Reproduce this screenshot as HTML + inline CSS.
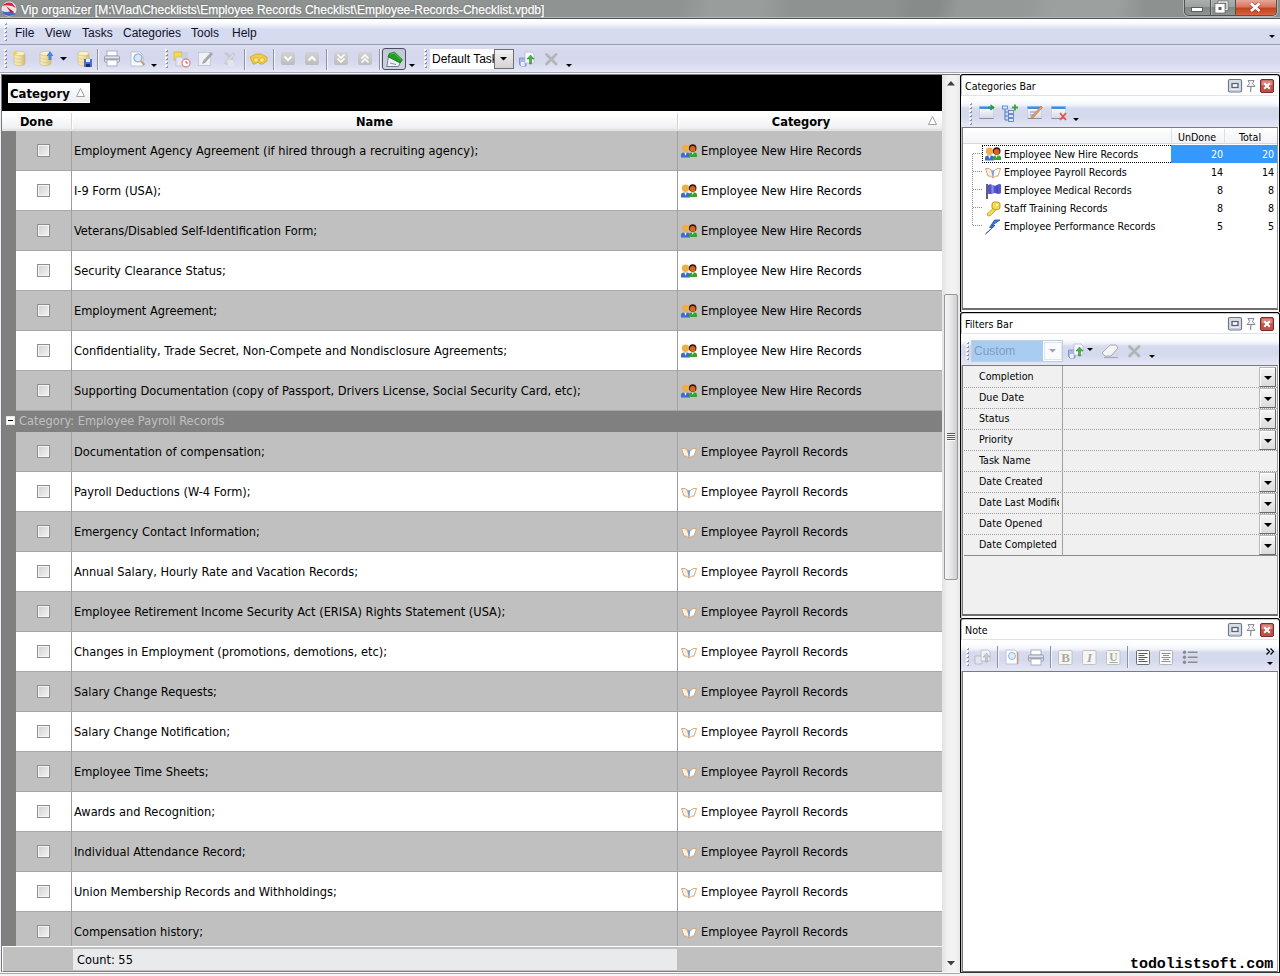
<!DOCTYPE html>
<html lang="en"><head><meta charset="utf-8"><title>Vip organizer</title>
<style>
*{box-sizing:border-box;margin:0;padding:0}
html,body{width:1280px;height:976px;overflow:hidden;background:#f0f0f0}
body{position:relative;font-family:"DejaVu Sans Condensed","Liberation Sans",sans-serif;font-size:11px;color:#000}
.abs{position:absolute}
svg{position:absolute;overflow:visible}
/* title bar */
#title{position:absolute;left:0;top:0;width:1280px;height:18px;background:linear-gradient(100deg,#8b908f 0,#8d9291 200px,#8f9493 500px,#8f9493 670px,#999e9d 700px,#999e9d 750px,#8e9392 780px,#8e9392 880px,#878c8b 900px,#878c8b 925px,#959a99 945px,#959a99 1010px,#9ca1a0 1040px,#9ca1a0 1100px,#8d9291 1130px,#8b908f 1280px);box-shadow:inset 0 -1px 0 #b4b8b8}
#title .t{position:absolute;left:21px;top:2px;color:#fff;font:12px/16px "Liberation Sans",sans-serif;white-space:pre;text-shadow:0 0 2px rgba(60,60,60,.6);-webkit-text-stroke:.25px #fff}
#tline{position:absolute;left:0;top:18px;width:1280px;height:1px;background:#505454}
#wbtn{position:absolute;left:1184px;top:0;width:93px;height:16px;border:1px solid #4f5352;border-top:none;border-radius:0 0 5px 5px;overflow:hidden;background:linear-gradient(#abafaf,#9da1a1 45%,#848988 50%,#8f9493);box-shadow:0 0 0 1px rgba(255,255,255,.35)}
#wbtn .c{position:absolute;left:50px;top:0;width:43px;height:16px;background:linear-gradient(#e6a898,#d7735b 45%,#c4411f 50%,#cf5530 80%,#dc7450);border-left:1px solid #4f5352}
#wbtn .s{position:absolute;left:25px;top:0;width:1px;height:16px;background:#4f5352;box-shadow:1px 0 0 rgba(255,255,255,.25)}
/* menu */
#menu{position:absolute;left:0;top:19px;width:1280px;height:26px;background:linear-gradient(#fff 0,#fbfbfe 4px,#e4e8f5 8px,#d6dcef 10px,#d6dbef 100%)}
#menu span{position:absolute;top:7px;font:12px/15px "Liberation Sans",sans-serif;color:#10102a;white-space:pre}
#mline{position:absolute;left:0;top:44px;width:1280px;height:1px;background:#9a9cab}
#tb{position:absolute;left:0;top:45px;width:1280px;height:27px;background:linear-gradient(#dcdff1 0,#d6d9ed 6px,#d5d8ec 15px,#dde0f3 22px,#e8eaf7 27px)}
#tbline{position:absolute;left:0;top:72px;width:1280px;height:2px;background:linear-gradient(#a6a8b4 0,#a6a8b4 1px,#fbfbfd 1px)}
.grip{position:absolute;width:3px}
.grip::before{content:"";position:absolute;left:1px;top:1px;width:2px;height:100%;background:repeating-linear-gradient(#8f95b3 0,#8f95b3 2px,transparent 2px,transparent 4px)}
.grip::after{content:"";position:absolute;left:0;top:0;width:2px;height:100%;background:repeating-linear-gradient(#fff 0,#fff 2px,transparent 2px,transparent 4px)}
.sep{position:absolute;width:1px;background:#8e92a8;box-shadow:1px 0 0 #f4f5fb}
/* main list (page-absolute coords) */
#leftedge{position:absolute;left:0;top:74px;width:960px;height:902px;background:#f0f0f0}
#lborder{position:absolute;left:1px;top:74px;width:959px;height:898px;border:1px solid #767a80;border-right:none;border-bottom:none}
#listbg{position:absolute;left:2px;top:75px;width:940px;height:897px;background:#c0c0c0}
#grpbox{position:absolute;left:2px;top:75px;width:940px;height:36px;background:#000}
#chip{position:absolute;left:8px;top:83px;width:82px;height:20px;background:linear-gradient(#fff,#eceef2);border:1px solid #fff;font:bold 13px/20px "DejaVu Sans Condensed","Liberation Sans",sans-serif;padding-left:1px;white-space:pre}
#hdr{position:absolute;left:2px;top:111px;width:940px;height:20px;background:linear-gradient(#fff 0,#fff 4px,#eef0f3 17px,#e9ebee 18px,#d5d5d5 19px,#f4f4f4 20px)}
#hdr b{position:absolute;top:2px;font:bold 12.7px/18px "DejaVu Sans Condensed","Liberation Sans",sans-serif;white-space:pre;text-align:center}
#hdr i{position:absolute;top:2px;width:1px;height:16px;background:#d4d4d8;box-shadow:1px 0 0 #fff}
#strip{position:absolute;left:2px;top:131px;width:14px;height:815px;background:#808080}
.row{position:absolute;left:16px;width:926px;height:40px;font-size:12.7px;line-height:39px;white-space:pre}
.row.g{background:#c0c0c0;border-bottom:1px solid #a6a6a6}
.row.w{background:#fff;border-bottom:1px solid #a9a9a9}
.row::before{content:"";position:absolute;left:55px;top:0;width:1px;height:40px;background:#9c9c9c}
.row::after{content:"";position:absolute;left:661px;top:0;width:1px;height:40px;background:#9c9c9c}
.row.g::before,.row.g::after{background:#a2a2a2}
.cb{position:absolute;left:21px;top:13px;width:13px;height:13px;border:1px solid #8e8f8f;background:linear-gradient(135deg,#cfcfcf,#f6f6f6);box-shadow:inset 0 0 0 1px #f4f4f4}
.nm{position:absolute;left:58px;top:0}
.ct{position:absolute;left:685px;top:0}
.ci{left:665px;top:13px}
.grp{position:absolute;left:2px;width:940px;height:21px;background:#808080;color:#c0c0c0;font-size:12.7px;line-height:20px;padding-left:17px;white-space:pre}
.minus{position:absolute;left:4px;top:5px;width:9px;height:9px;background:#fff;border:1px solid #e8e8e8}
.minus::after{content:"";position:absolute;left:1px;top:3px;width:5px;height:1px;background:#000}
#foot{position:absolute;left:2px;top:946px;width:940px;height:26px;background:#c0c0c0;border-top:1px solid #fff;border-left:1px solid #fff;border-bottom:1px solid #808080}
#cnt{position:absolute;left:73px;top:949px;width:604px;height:21px;background:#e8eaeb;font-size:12.7px;line-height:21px;padding-left:4px;white-space:pre}
#botline{position:absolute;left:0;top:972px;width:960px;height:4px;background:linear-gradient(#fafafa 0,#fafafa 1px,#a8a8a8 1px,#a8a8a8 2px,#f4f4f4 2px)}
/* scrollbar */
#sb{position:absolute;left:942px;top:75px;width:18px;height:897px;background:linear-gradient(90deg,#e3e3e3,#f0f0f0 30%,#f3f3f3 70%,#e9e9e9)}
#thumb{position:absolute;left:944px;top:294px;width:14px;height:286px;border:1px solid #979797;border-radius:2px;background:linear-gradient(90deg,#f5f5f5,#e6e6e8 50%,#cfcfd3)}
/* right panels */
.pnl{position:absolute;left:960px;width:320px;background:#fff;border:1px solid #000;border-bottom:none;border-radius:3px 3px 0 0;box-shadow:inset 1px 0 0 rgba(0,0,0,.25),inset 0 1px 0 rgba(0,0,0,.2)}
.sunk{position:absolute;left:962px;width:316px;border:1px solid #7b7b7b;border-right-color:#9a9a9a;border-bottom:2px solid #6e6e6e}
.pt{position:absolute;left:965px;font-size:10.6px;line-height:14px;white-space:pre;color:#000}
.ptb{position:absolute;left:961px;width:318px;background:linear-gradient(#fff 0,#f9fafd 7px,#eceef8 10px,#d7dbee 12px,#d4d8ec 20px,#e3e6f5 30px)}
.pbtn{position:absolute;width:14px;height:14px}
.tree{position:absolute;left:963px;top:128px;width:314px;height:181px;background:#fff;border-top:0}
.th{position:absolute;left:963px;top:128px;width:314px;height:16px;background:linear-gradient(#fff,#f2f3f6);border-bottom:1px solid #d9d9dc}
.th span{position:absolute;top:2px;font-size:10.6px;line-height:14px}
.tr{position:absolute;left:963px;width:314px;height:18px;font-size:10.6px;line-height:18px;white-space:pre}
.tr .l{position:absolute;left:41px;top:0}
.tr .n1{position:absolute;right:54px;top:0;text-align:right}
.tr .n2{position:absolute;right:3px;top:0;text-align:right}
.tr svg{left:22px;top:2px}
.sel{position:absolute;left:1171px;top:145px;width:106px;height:18px;background:#3399ff}
.focus{position:absolute;left:982px;top:145px;width:189px;height:18px;border:1px dotted #000;border-right:none}
.fgrid{position:absolute;left:963px;top:366px;width:314px;height:248px;background:#f0f0f0}
.fr{position:absolute;left:964px;width:313px;height:21px;font-size:10.6px;line-height:18px;border-bottom:1px dotted #9c9c9c;white-space:pre;overflow:hidden}
.fr span{position:absolute;left:15px;top:0;width:80px;overflow:hidden}
.fdiv{position:absolute;left:1062px;top:366px;width:1px;height:190px;background:#a0a0a0}
.dd{position:absolute;left:1259px;width:17px;height:20px;border:1px solid #b8b8b8;border-right-color:#6a6a6a;border-bottom-color:#6a6a6a;background:linear-gradient(#f6f6f6,#dcdcdc);box-shadow:inset 1px 1px 0 #fff}
.dd::after{content:"";position:absolute;left:4px;top:8px;border:4px solid transparent;border-top:4px solid #000;border-bottom:0}
.wm{position:absolute;left:1130px;top:955.5px;font:bold 15px/18px "Liberation Mono",monospace;color:#000;white-space:pre;letter-spacing:-0.05px}

</style></head><body>
<svg width="0" height="0" style="position:absolute"><defs>
<linearGradient id="gcyl" x1="0" x2="1"><stop offset="0" stop-color="#f6ecc0"/><stop offset=".5" stop-color="#f2e2a2"/><stop offset="1" stop-color="#cdb978"/></linearGradient>
<linearGradient id="gbtn" x1="0" x2="0" y1="0" y2="1"><stop offset="0" stop-color="#d2d2d2"/><stop offset="1" stop-color="#bdbdbd"/></linearGradient>
<linearGradient id="gwin" x1="0" x2="0" y1="0" y2="1"><stop offset="0" stop-color="#ffffff"/><stop offset="1" stop-color="#d4d8e6"/></linearGradient>
<g id="i-people"><circle cx="4.500" cy="4.200" r="3.700" fill="#edae4e"/><path d="M0 13.500 v-2.500 q0-2.500 3-2.500 h3 q3 0 3 2.500 v2.500z" fill="#3f69cd"/><path d="M3.300 8.500 l1.200 3.500 l1.200-3.500z" fill="#fff"/><circle cx="11.700" cy="4" r="3.800" fill="#38190e"/><circle cx="11.700" cy="4.800" r="2.800" fill="#d8641e"/><path d="M8 13 v-2 q0-2.500 2.500-2.500 h3 q2.500 0 2.500 2.500 v2z" fill="#34a234"/><path d="M10.700 8.500 l1 2.500 l1-2.500z" fill="#fff"/></g>
<g id="i-book"><path d="M0.500 3.500 Q4 2.500 7.500 6 L8 13 Q5.500 10.500 3 11 Z" fill="#fbf1e2" stroke="#d6a676" stroke-width="1"/><path d="M15.500 3.500 Q12 2.500 8.500 6 L8 13 Q10.500 10.500 13 11 Z" fill="#ffffff" stroke="#d6a676" stroke-width="1"/><path d="M6 5.500 L8 12 L9.500 5 Z" fill="#78a4e4"/></g>
<g id="i-flag"><path d="M2 1 v15" stroke="#50506e" stroke-width="1.800"/><path d="M3 2 q2-1.500 4.500 0 t4.500 0 t4-0.500 v8.500 q-2 1.500-4 0.500 t-4.500 0 t-4.500 0z" fill="#5656cc"/><path d="M7.500 2 v8.500" stroke="#8e8eea" stroke-width="2"/><path d="M12 2.500 v8" stroke="#4646b4" stroke-width="1.500"/></g>
<g id="i-key"><rect x="7" y="1" width="8" height="7.500" rx="2.500" fill="#f6dc50" stroke="#b89a1c"/><rect x="11" y="3" width="2" height="2" fill="#fff8d0"/><path d="M8 7.500 l-6 5.500 l1 2 l2.500-0.500 l5-5z" fill="#f6dc50" stroke="#b89a1c" stroke-width=".8"/></g>
<g id="i-bolt"><path d="M15 1 l-8 5.500 h3 l-9.500 8.500 l7-6.500 h-3 l5-7.500z" fill="#3f80dc" stroke="#1c3c8c" stroke-width=".7"/></g>
<g id="i-db"><path d="M2 3.500 v10 a5.500 2.200 0 0 0 11 0 v-10z" fill="url(#gcyl)" stroke="#cbb77a" stroke-width=".6"/><ellipse cx="7.500" cy="3.500" rx="5.500" ry="2.200" fill="#f8f0cc" stroke="#cbb77a" stroke-width=".6"/><path d="M2 7 a5.500 2.200 0 0 0 11 0 M2 10.300 a5.500 2.200 0 0 0 11 0" fill="none" stroke="#d6c48a" stroke-width=".7"/></g>
<g id="i-dn"><rect x="0" y="0" width="14" height="13" rx="2" fill="url(#gbtn)"/><path d="M3.500 4.500 l3.500 3.500 l3.500-3.500" fill="none" stroke="#fff" stroke-width="2"/></g>
<g id="i-up"><rect x="0" y="0" width="14" height="13" rx="2" fill="url(#gbtn)"/><path d="M3.500 8.500 l3.500-3.500 l3.500 3.500" fill="none" stroke="#fff" stroke-width="2"/></g>
<g id="i-dn2"><rect x="0" y="0" width="14" height="13" rx="2" fill="url(#gbtn)"/><path d="M3.500 2.500 l3.500 3.500 l3.500-3.500 M3.500 6.500 l3.500 3.500 l3.500-3.500" fill="none" stroke="#fff" stroke-width="1.700"/></g>
<g id="i-up2"><rect x="0" y="0" width="14" height="13" rx="2" fill="url(#gbtn)"/><path d="M3.500 6.500 l3.500-3.500 l3.500 3.500 M3.500 10.500 l3.500-3.500 l3.500 3.500" fill="none" stroke="#fff" stroke-width="1.700"/></g>
<g id="i-arr"><path d="M0 0 h6 l-3 3z" fill="#000"/></g>
<g id="i-prn"><rect x="3" y="0" width="10" height="5" fill="#fff" stroke="#9aa0b0" stroke-width=".8"/><rect x="0.500" y="5" width="15" height="6" rx="1" fill="#e4e6ee" stroke="#8a90a2" stroke-width=".8"/><rect x="3" y="9" width="10" height="6" fill="#fff" stroke="#9aa0b0" stroke-width=".8"/><path d="M1 8 h14" stroke="#7a8092" stroke-width="1"/></g>
<g id="i-prev"><path d="M1 1 h9 l3 3 v11 h-12z" fill="#fbfcff" stroke="#b4bad0" stroke-width=".8"/><circle cx="8" cy="7" r="4" fill="#d6e8f8" stroke="#88a8d0" stroke-width="1.200"/><path d="M11 10 l3.500 4" stroke="#d49a6a" stroke-width="2"/></g>
<g id="i-win"><rect x="0.500" y="1.500" width="14" height="12" fill="url(#gwin)" stroke="#c4c8d8" stroke-width=".6"/><rect x="0.500" y="1.500" width="14" height="2.500" fill="#3f8ee0"/><path d="M0.500 13.500 h14" stroke="#8a8ea0" stroke-width="1"/></g>
<g id="i-x"><path d="M1.500 1.500 l9.500 9.500 M11 1.500 l-9.500 9.500" stroke="#b2b4b8" stroke-width="2.800" stroke-linecap="round"/></g>
<g id="i-flt"><path d="M0.500 7 h6.500 v8 h-5 l-1.500-1.500z" fill="#a9b8e6" stroke="#7288cc" stroke-width=".8"/><rect x="2" y="11" width="3.500" height="4" fill="#eef1fa"/><path d="M6 1 h7 l2 2 v9 h-9z" fill="#f7f9fd" stroke="#b4bcd4" stroke-width=".8"/><path d="M10.500 13 v-5 h-2.500 l3.500-4 l3.500 4 h-2.500 v5z" fill="#46b446" stroke="#2a7a2a" stroke-width=".5"/></g>
<g id="p-max"><rect x="0.500" y="0.500" width="13" height="12.500" rx="1.500" fill="#eef0f6" stroke="#6c7488" stroke-width="1.200"/><rect x="2" y="2" width="10" height="9.500" fill="none" stroke="#c4cad8" stroke-width="1"/><rect x="4" y="4.500" width="6" height="4" fill="#fff" stroke="#5a6278" stroke-width="1.400"/></g>
<g id="p-pin"><path d="M3 1.500 h6 l-1.500 3 l2.500 3 h-8 l2.500-3z" fill="#f2f2f6" stroke="#8a8c96" stroke-width="1"/><path d="M6 7.500 l-0.500 5.500" stroke="#8a8c96" stroke-width="1.200"/></g>
<g id="p-cls"><rect x="0.500" y="0.500" width="13" height="13" rx="1.500" fill="#c0504a" stroke="#7e2a26" stroke-width="1"/><rect x="1.500" y="1.500" width="11" height="5" rx="1" fill="#dc9a94" opacity=".75"/><path d="M4.200 4.200 l5.600 5.600 M9.800 4.200 l-5.600 5.600" stroke="#fff" stroke-width="2"/></g>
<g id="i-gbtn"><rect x="0.500" y="0.500" width="13.500" height="14" rx="1" fill="#f6f6f4" stroke="#c2c2be" stroke-width="1"/></g>
</defs></svg>

<div id="title"><span class="t">Vip organizer [M:\Vlad\Checklists\Employee Records Checklist\Employee-Records-Checklist.vpdb]</span></div>
<div id="tline"></div>
<div id="wbtn"><div class="s"></div><div class="c"></div></div>
<div id="menu"><span style="left:15px">File</span><span style="left:45px">View</span><span style="left:82px">Tasks</span><span style="left:123px">Categories</span><span style="left:191px">Tools</span><span style="left:232px">Help</span></div>
<div id="mline"></div>
<div id="tb"></div>
<div id="tbline"></div>
<div id="leftedge"></div><div id="lborder"></div>
<div id="listbg"></div>
<div id="grpbox"></div>
<div id="chip">Category</div>
<div id="hdr"><b style="left:0;width:69px">Done</b><i style="left:69px"></i><b style="left:70px;width:605px">Name</b><i style="left:675px"></i><b style="left:676px;width:246px">Category</b></div>
<div id="strip"></div>
<div class="row g" style="top:131px"><span class="cb"></span><span class="nm">Employment Agency Agreement (if hired through a recruiting agency);</span><svg class="ci" width="16" height="16"><use href="#i-people"/></svg><span class="ct">Employee New Hire Records</span></div>
<div class="row w" style="top:171px"><span class="cb"></span><span class="nm">I-9 Form (USA);</span><svg class="ci" width="16" height="16"><use href="#i-people"/></svg><span class="ct">Employee New Hire Records</span></div>
<div class="row g" style="top:211px"><span class="cb"></span><span class="nm">Veterans/Disabled Self-Identification Form;</span><svg class="ci" width="16" height="16"><use href="#i-people"/></svg><span class="ct">Employee New Hire Records</span></div>
<div class="row w" style="top:251px"><span class="cb"></span><span class="nm">Security Clearance Status;</span><svg class="ci" width="16" height="16"><use href="#i-people"/></svg><span class="ct">Employee New Hire Records</span></div>
<div class="row g" style="top:291px"><span class="cb"></span><span class="nm">Employment Agreement;</span><svg class="ci" width="16" height="16"><use href="#i-people"/></svg><span class="ct">Employee New Hire Records</span></div>
<div class="row w" style="top:331px"><span class="cb"></span><span class="nm">Confidentiality, Trade Secret, Non-Compete and Nondisclosure Agreements;</span><svg class="ci" width="16" height="16"><use href="#i-people"/></svg><span class="ct">Employee New Hire Records</span></div>
<div class="row g" style="top:371px"><span class="cb"></span><span class="nm">Supporting Documentation (copy of Passport, Drivers License, Social Security Card, etc);</span><svg class="ci" width="16" height="16"><use href="#i-people"/></svg><span class="ct">Employee New Hire Records</span></div>
<div class="grp" style="top:411px"><span class="minus"></span>Category: Employee Payroll Records</div>
<div class="row g" style="top:432px"><span class="cb"></span><span class="nm">Documentation of compensation;</span><svg class="ci" width="16" height="16"><use href="#i-book"/></svg><span class="ct">Employee Payroll Records</span></div>
<div class="row w" style="top:472px"><span class="cb"></span><span class="nm">Payroll Deductions (W-4 Form);</span><svg class="ci" width="16" height="16"><use href="#i-book"/></svg><span class="ct">Employee Payroll Records</span></div>
<div class="row g" style="top:512px"><span class="cb"></span><span class="nm">Emergency Contact Information;</span><svg class="ci" width="16" height="16"><use href="#i-book"/></svg><span class="ct">Employee Payroll Records</span></div>
<div class="row w" style="top:552px"><span class="cb"></span><span class="nm">Annual Salary, Hourly Rate and Vacation Records;</span><svg class="ci" width="16" height="16"><use href="#i-book"/></svg><span class="ct">Employee Payroll Records</span></div>
<div class="row g" style="top:592px"><span class="cb"></span><span class="nm">Employee Retirement Income Security Act (ERISA) Rights Statement (USA);</span><svg class="ci" width="16" height="16"><use href="#i-book"/></svg><span class="ct">Employee Payroll Records</span></div>
<div class="row w" style="top:632px"><span class="cb"></span><span class="nm">Changes in Employment (promotions, demotions, etc);</span><svg class="ci" width="16" height="16"><use href="#i-book"/></svg><span class="ct">Employee Payroll Records</span></div>
<div class="row g" style="top:672px"><span class="cb"></span><span class="nm">Salary Change Requests;</span><svg class="ci" width="16" height="16"><use href="#i-book"/></svg><span class="ct">Employee Payroll Records</span></div>
<div class="row w" style="top:712px"><span class="cb"></span><span class="nm">Salary Change Notification;</span><svg class="ci" width="16" height="16"><use href="#i-book"/></svg><span class="ct">Employee Payroll Records</span></div>
<div class="row g" style="top:752px"><span class="cb"></span><span class="nm">Employee Time Sheets;</span><svg class="ci" width="16" height="16"><use href="#i-book"/></svg><span class="ct">Employee Payroll Records</span></div>
<div class="row w" style="top:792px"><span class="cb"></span><span class="nm">Awards and Recognition;</span><svg class="ci" width="16" height="16"><use href="#i-book"/></svg><span class="ct">Employee Payroll Records</span></div>
<div class="row g" style="top:832px"><span class="cb"></span><span class="nm">Individual Attendance Record;</span><svg class="ci" width="16" height="16"><use href="#i-book"/></svg><span class="ct">Employee Payroll Records</span></div>
<div class="row w" style="top:872px"><span class="cb"></span><span class="nm">Union Membership Records and Withholdings;</span><svg class="ci" width="16" height="16"><use href="#i-book"/></svg><span class="ct">Employee Payroll Records</span></div>
<div class="row g" style="top:912px"><span class="cb"></span><span class="nm">Compensation history;</span><svg class="ci" width="16" height="16"><use href="#i-book"/></svg><span class="ct">Employee Payroll Records</span></div>

<div id="foot"></div>
<div id="cnt">Count: 55</div>
<div id="botline"></div>
<div id="sb"></div>
<div id="thumb"></div>
<!-- Categories Bar -->
<div class="pnl" style="top:74px;height:238px"></div><div class="sunk" style="top:127px;height:183px"></div>
<div class="pt" style="top:79px">Categories Bar</div>
<div class="ptb" style="top:96px;height:31px"></div>
<div class="th"><span style="left:215px">UnDone</span><span style="left:276px">Total</span><i class="abs" style="left:208px;top:1px;width:1px;height:14px;background:#e0e0e4"></i><i class="abs" style="left:261px;top:1px;width:1px;height:14px;background:#e0e0e4"></i></div>
<div class="sel"></div>
<div class="focus"></div>
<svg class="abs" style="left:963px;top:128px" width="30" height="110"><path d="M9.5 26 V98 M10 25.500 H19 M10 43.500 H19 M10 61.500 H19 M10 79.500 H19 M10 97.500 H19" stroke="#8c8c8c" stroke-width="1" stroke-dasharray="1 1" fill="none" shape-rendering="crispEdges"/></svg>
<div class="tr" style="top:145px"><svg width="16" height="16"><use href="#i-people"/></svg><span class="l">Employee New Hire Records</span><span class="n1" style="color:#fff">20</span><span class="n2" style="color:#fff">20</span></div>
<div class="tr" style="top:163px"><svg width="16" height="16"><use href="#i-book"/></svg><span class="l">Employee Payroll Records</span><span class="n1">14</span><span class="n2">14</span></div>
<div class="tr" style="top:181px"><svg width="16" height="16"><use href="#i-flag"/></svg><span class="l">Employee Medical Records</span><span class="n1">8</span><span class="n2">8</span></div>
<div class="tr" style="top:199px"><svg width="16" height="16"><use href="#i-key"/></svg><span class="l">Staff Training Records</span><span class="n1">8</span><span class="n2">8</span></div>
<div class="tr" style="top:217px"><svg width="16" height="16"><use href="#i-bolt"/></svg><span class="l">Employee Performance Records</span><span class="n1">5</span><span class="n2">5</span></div>
<!-- Filters Bar -->
<div class="pnl" style="top:312px;height:306px"></div>
<div class="pt" style="top:317px">Filters Bar</div>
<div class="ptb" style="top:334px;height:31px"></div>
<div class="fgrid"></div><div class="sunk" style="top:365px;height:251px"></div>
<div class="fr" style="top:367px"><span>Completion</span></div><div class="dd" style="top:367px"></div>
<div class="fr" style="top:388px"><span>Due Date</span></div><div class="dd" style="top:388px"></div>
<div class="fr" style="top:409px"><span>Status</span></div><div class="dd" style="top:409px"></div>
<div class="fr" style="top:430px"><span>Priority</span></div><div class="dd" style="top:430px"></div>
<div class="fr" style="top:451px"><span>Task Name</span></div>
<div class="fr" style="top:472px"><span>Date Created</span></div><div class="dd" style="top:472px"></div>
<div class="fr" style="top:493px"><span>Date Last Modified</span></div><div class="dd" style="top:493px"></div>
<div class="fr" style="top:514px"><span>Date Opened</span></div><div class="dd" style="top:514px"></div>
<div class="fr" style="top:535px;border-bottom:1px solid #8c8c8c"><span>Date Completed</span></div><div class="dd" style="top:535px"></div>
<div class="fdiv"></div>
<!-- Note -->
<div class="pnl" style="top:618px;height:355px;border-bottom:1px solid #333"></div><div class="sunk" style="top:671px;height:301px;border-bottom-width:1px"></div>
<div class="pt" style="top:623px">Note</div>
<div class="ptb" style="top:640px;height:31px"></div>
<div class="wm">todolistsoft.com</div>
<!-- main toolbar -->
<div class="grip" style="left:4px;top:22px;height:20px"></div>
<div class="grip" style="left:4px;top:49px;height:20px"></div>
<svg style="left:12px;top:50px" width="16" height="17"><use href="#i-db"/><path d="M3 0 l1 2.500 l2.500 0.500 l-2.500 1 l-1 2.500 l-1-2.500 l-2.500-1 l2.500-0.500z" fill="#f4d43c"/></svg>
<svg style="left:38px;top:50px" width="16" height="17"><use href="#i-db"/><path d="M12 1 l3.500 5 h-2 v4 h-3 v-4 h-2z" fill="#4a86e0"/></svg>
<svg style="left:60px;top:57px" width="8" height="4"><path d="M0 0 h7 l-3.500 3.500z" fill="#000"/></svg>
<svg style="left:76px;top:50px" width="16" height="17"><use href="#i-db"/><rect x="8" y="9" width="8" height="8" fill="#4a6ed0"/><rect x="10" y="9" width="4" height="3" fill="#e8ecfa"/><rect x="10" y="14" width="4" height="3" fill="#1c2c6a"/></svg>
<div class="sep" style="left:97px;top:49px;height:21px"></div>
<svg style="left:104px;top:51px" width="16" height="16"><use href="#i-prn"/></svg>
<svg style="left:130px;top:51px" width="16" height="16"><use href="#i-prev"/></svg>
<svg style="left:151px;top:64px" width="6" height="3"><use href="#i-arr"/></svg>
<div class="grip" style="left:165px;top:49px;height:20px"></div>
<svg style="left:174px;top:51px" width="17" height="17"><rect x="0" y="1" width="8" height="8" fill="#f4dc4c" stroke="#c8a830" stroke-width=".6"/><rect x="2" y="6" width="10" height="9" fill="#e4e8f4" stroke="#a8b0c8" stroke-width=".6"/><rect x="8" y="1" width="6" height="7" fill="#c4d0ec"/><circle cx="12" cy="12" r="4" fill="#fff" stroke="#e08a8a" stroke-width="1.400"/><path d="M12 10 v2 h2" stroke="#c84a4a" stroke-width="1" fill="none"/></svg>
<svg style="left:198px;top:51px" width="16" height="16"><rect x="0.500" y="1.500" width="12" height="13" fill="#f0f1f5" stroke="#c0c2cc" stroke-width=".8"/><path d="M4 13 l1-3 l8-9 l2 2 l-8 9z" fill="#a4a6ac"/></svg>
<svg style="left:222px;top:51px" width="16" height="16"><path d="M2 2 l3-1 l8 9 l-2 2z" fill="#c8cad0"/><path d="M11 2 l2 1 l-7 10 h-3 v-2z" fill="#d8dae0" stroke="#b8bac2" stroke-width=".6"/><rect x="6" y="9" width="6" height="6" rx="1" fill="#e4e5ea"/></svg>
<div class="sep" style="left:244px;top:49px;height:21px"></div>
<svg style="left:250px;top:53px" width="18" height="12"><path d="M0 4 l6-3 h5 l6 3 v4 l-4 3 h-3 l-2-2 l-3 2 h-2z" fill="#f2cc44" stroke="#c89c24" stroke-width=".7"/><circle cx="6" cy="7" r="2.400" fill="#fae684" stroke="#c89c24" stroke-width=".6"/><circle cx="12" cy="7" r="2.400" fill="#fae684" stroke="#c89c24" stroke-width=".6"/></svg>
<div class="sep" style="left:273px;top:49px;height:21px"></div>
<svg style="left:281px;top:52px" width="14" height="13"><use href="#i-dn"/></svg>
<svg style="left:305px;top:52px" width="14" height="13"><use href="#i-up"/></svg>
<div class="sep" style="left:326px;top:49px;height:21px"></div>
<svg style="left:334px;top:52px" width="14" height="13"><use href="#i-dn2"/></svg>
<svg style="left:358px;top:52px" width="14" height="13"><use href="#i-up2"/></svg>
<div class="sep" style="left:379px;top:49px;height:21px"></div>
<div class="abs" style="left:382px;top:48px;width:24px;height:22px;border:1px solid #4c4f5e;border-radius:3px;background:linear-gradient(#c2c6d6,#cfd2e2)"></div>
<svg style="left:386px;top:51px" width="17" height="16"><path d="M2.500 5.500 L0.800 15.500 L12.500 15.500 L14.500 11 Z" fill="#eef1f6" stroke="#5c6480" stroke-width=".8"/><path d="M4 12 l6 1.500" stroke="#8a92aa" stroke-width="1"/><path d="M3.400 2.400 L8.500 1.200 L16.500 8.800 L14 12 L2 5.800 Z" fill="#1f9e1f" stroke="#0f6c0f" stroke-width=".7"/><path d="M4.500 3 L8.300 2.200 L15 8.600" stroke="#58c458" stroke-width="1" fill="none"/></svg>
<svg style="left:409px;top:64px" width="6" height="3"><use href="#i-arr"/></svg>
<div class="grip" style="left:424px;top:49px;height:20px"></div>
<div class="abs" style="left:430px;top:49px;width:65px;height:20px;background:#fff;overflow:hidden;font:12px/21px 'Liberation Sans',sans-serif;padding-left:2px;white-space:pre">Default Task</div>
<div class="abs" style="left:494px;top:49px;width:20px;height:20px;border:1px solid #707070;background:linear-gradient(#f2f2f2,#d2d2d2)"></div>
<svg style="left:500px;top:57px" width="8" height="4"><path d="M0 0 h7 l-3.500 3.500z" fill="#000"/></svg>
<svg style="left:519px;top:51px" width="16" height="16"><use href="#i-flt"/></svg>
<svg style="left:545px;top:53px" width="13" height="13"><use href="#i-x"/></svg>
<svg style="left:566px;top:64px" width="6" height="3"><use href="#i-arr"/></svg>
<svg style="left:1269px;top:35px" width="6" height="3"><use href="#i-arr"/></svg>
<!-- app icon -->
<svg style="left:1px;top:1px" width="16" height="16"><circle cx="8" cy="8" r="7.500" fill="#e8e4ec"/><path d="M1 5 q4-5 10-3 l4 5 q-6-4-14-2z" fill="#d82838"/><path d="M1 10 q5 2 9 0 l5 3 q-7 4-13 0z" fill="#4a66c8"/><path d="M5 5 l8 6 l-3 1z" fill="#c81c2c"/></svg>
<!-- window buttons glyphs -->
<div class="abs" style="left:1191px;top:7px;width:12px;height:5px;background:#fff;border:1px solid #5a5e5d"></div>
<svg style="left:1214px;top:1px" width="14" height="12"><rect x="5" y="1" width="8" height="7.500" fill="#a6aaaa" stroke="#4f5352" stroke-width="2.600"/><rect x="5" y="1" width="8" height="7.500" fill="none" stroke="#fff" stroke-width="1.400"/><rect x="2" y="3.500" width="8" height="7.500" fill="#fff" stroke="#4f5352" stroke-width="2.600"/><rect x="2" y="3.500" width="8" height="7.500" fill="#fff" stroke="#fff" stroke-width="1.400"/><rect x="4.500" y="6" width="3" height="3" fill="#5a5e5d"/></svg>
<svg style="left:1249px;top:2px" width="13" height="10"><path d="M2 1.500 l8.500 7.500 M10.500 1.500 l-8.500 7.500" stroke="#7a2a18" stroke-width="4.200" opacity=".55"/><path d="M2 1.500 l8.500 7.500 M10.500 1.500 l-8.500 7.500" stroke="#fff" stroke-width="2.800"/></svg>
<!-- panel buttons -->
<svg style="left:1228px;top:79px" width="14" height="14"><use href="#p-max"/></svg><svg style="left:1245px;top:79px" width="12" height="14"><use href="#p-pin"/></svg><svg style="left:1260px;top:79px" width="14" height="14"><use href="#p-cls"/></svg>
<svg style="left:1228px;top:317px" width="14" height="14"><use href="#p-max"/></svg><svg style="left:1245px;top:317px" width="12" height="14"><use href="#p-pin"/></svg><svg style="left:1260px;top:317px" width="14" height="14"><use href="#p-cls"/></svg>
<svg style="left:1228px;top:623px" width="14" height="14"><use href="#p-max"/></svg><svg style="left:1245px;top:623px" width="12" height="14"><use href="#p-pin"/></svg><svg style="left:1260px;top:623px" width="14" height="14"><use href="#p-cls"/></svg>
<!-- categories toolbar -->
<div class="grip" style="left:969px;top:102px;height:22px"></div>
<svg style="left:979px;top:105px" width="16" height="16"><use href="#i-win"/><path d="M9 2.500 h4 M11.500 0 l3 2.500 l-3 2.500" stroke="#2e9a2e" stroke-width="1.600" fill="none"/></svg>
<svg style="left:1002px;top:105px" width="17" height="17"><path d="M3 3 v12 h4 M3 7 h4 M3 11 h4" stroke="#4a7ac8" stroke-width="1" fill="none"/><rect x="0.500" y="1" width="5" height="3" fill="#dce8fa" stroke="#4a7ac8" stroke-width=".8"/><rect x="6.500" y="5.500" width="5" height="3" fill="#dce8fa" stroke="#4a7ac8" stroke-width=".8"/><rect x="6.500" y="9.500" width="5" height="3" fill="#dce8fa" stroke="#4a7ac8" stroke-width=".8"/><rect x="6.500" y="13.500" width="5" height="3" fill="#dce8fa" stroke="#4a7ac8" stroke-width=".8"/><path d="M10 2.500 h6 M13 -0.500 v6" stroke="#3ea23e" stroke-width="1.800"/></svg>
<svg style="left:1027px;top:105px" width="16" height="16"><use href="#i-win"/><path d="M3 7 h6 M3 10 h5" stroke="#6a9ad8" stroke-width="1"/><path d="M5 11 l9-10 l1.500 1.500 l-9 10 l-2.500 0.500z" fill="#e89a5a" stroke="#b86a3a" stroke-width=".5"/></svg>
<svg style="left:1051px;top:105px" width="16" height="16"><use href="#i-win"/><path d="M9 8 l6 7 M15 8 l-6 7" stroke="#e8504c" stroke-width="1.800"/></svg>
<svg style="left:1073px;top:118px" width="6" height="3"><use href="#i-arr"/></svg>
<!-- filters toolbar -->
<div class="grip" style="left:966px;top:341px;height:20px"></div>
<div class="abs" style="left:971px;top:340px;width:92px;height:22px;border:1px solid #c4cce0;background:#fff"></div>
<div class="abs" style="left:972px;top:341px;width:71px;height:20px;background:#a9cdf1;color:#7f9dc2;font:12px/21px 'Liberation Sans',sans-serif;padding-left:2px">Custom</div>
<div class="abs" style="left:1044px;top:342px;width:18px;height:18px;border:1px solid #dfe3ee;background:#fafbfd"></div>
<svg style="left:1049px;top:349px" width="8" height="4"><path d="M0 0 h7 l-3.500 3.500z" fill="#9aa0ac"/></svg>
<svg style="left:1068px;top:343px" width="16" height="16"><use href="#i-flt"/></svg>
<svg style="left:1087px;top:348px" width="6" height="3"><use href="#i-arr"/></svg>
<svg style="left:1101px;top:344px" width="18" height="14"><path d="M1 9 l8-8 h6 l2 3 l-7 8 h-6z" fill="#f4f4f6" stroke="#a8aab2" stroke-width="1"/><path d="M3 13.500 h14" stroke="#a8aab2" stroke-width="1.200"/></svg>
<svg style="left:1128px;top:345px" width="13" height="13"><use href="#i-x"/></svg>
<svg style="left:1149px;top:355px" width="6" height="3"><use href="#i-arr"/></svg>
<!-- note toolbar -->
<div class="grip" style="left:966px;top:647px;height:20px"></div>
<svg style="left:975px;top:649px" width="16" height="16"><path d="M0 7 h7 v8 h-7z" fill="#e4e6ee" stroke="#b0b4c0" stroke-width=".8"/><path d="M6 1 h7 l2 2 v9 h-9z" fill="#f0f1f5" stroke="#b8bac4" stroke-width=".8"/><path d="M10.500 13 v-5 h-2.500 l3.500-4 l3.500 4 h-2.500 v5z" fill="#c8cad0" stroke="#9a9ca4" stroke-width=".5"/></svg>
<div class="sep" style="left:997px;top:646px;height:22px"></div>
<svg style="left:1005px;top:649px" width="16" height="16"><path d="M1 1 h9 l3 3 v11 h-12z" fill="#fbfcff" stroke="#b4bad0" stroke-width=".8"/><circle cx="7" cy="7" r="3.500" fill="#dcecf8" stroke="#9ab4d4" stroke-width="1"/><path d="M12.500 3 v12" stroke="#d49a6a" stroke-width="1.500"/></svg>
<svg style="left:1028px;top:650px" width="16" height="16"><use href="#i-prn"/></svg>
<div class="sep" style="left:1050px;top:646px;height:22px"></div>
<svg style="left:1058px;top:650px" width="15" height="15"><use href="#i-gbtn"/><text x="7.500" y="12" text-anchor="middle" font-family="Liberation Serif,serif" font-weight="bold" font-size="13" fill="#a9a9a5">B</text></svg>
<svg style="left:1082px;top:650px" width="15" height="15"><use href="#i-gbtn"/><text x="7.500" y="12" text-anchor="middle" font-family="Liberation Serif,serif" font-style="italic" font-weight="bold" font-size="13" fill="#a9a9a5">I</text></svg>
<svg style="left:1106px;top:650px" width="15" height="15"><use href="#i-gbtn"/><text x="7.500" y="11" text-anchor="middle" font-family="Liberation Serif,serif" font-weight="bold" font-size="11.500" fill="#a9a9a5">U</text><path d="M3.500 12.500 h8" stroke="#a9a9a5" stroke-width="1"/></svg>
<div class="sep" style="left:1127px;top:646px;height:22px"></div>
<svg style="left:1136px;top:650px" width="15" height="15"><rect x="0.500" y="0.500" width="13" height="14" rx="1" fill="#fafafa" stroke="#6e6e6e" stroke-width="1"/><path d="M2.500 3.500 h9 M2.500 5.500 h6 M2.500 7.500 h9 M2.500 9.500 h6 M2.500 11.500 h9" stroke="#5a5a5a" stroke-width="1"/></svg>
<svg style="left:1159px;top:650px" width="15" height="15"><rect x="0.500" y="0.500" width="13" height="14" rx="1" fill="#fafafa" stroke="#b4b4b4" stroke-width="1"/><path d="M2.500 3.500 h9 M4 5.500 h6 M2.500 7.500 h9 M4 9.500 h6 M2.500 11.500 h9" stroke="#8e8e8e" stroke-width="1"/></svg>
<svg style="left:1182px;top:650px" width="17" height="15"><circle cx="2.500" cy="2.200" r="1.700" fill="#8c8c8c"/><circle cx="2.500" cy="7.200" r="1.700" fill="#8c8c8c"/><circle cx="2.500" cy="12.200" r="1.700" fill="#8c8c8c"/><path d="M6 2.200 h9.500 M6 7.200 h9.500 M6 12.200 h9.500" stroke="#8c8c8c" stroke-width="1.600"/></svg>
<svg style="left:1266px;top:648px" width="9" height="7"><path d="M0.500 0.500 l3 3 l-3 3 M4.500 0.500 l3 3 l-3 3" stroke="#000" stroke-width="1.300" fill="none"/></svg>
<svg style="left:1267px;top:662px" width="6" height="3"><use href="#i-arr"/></svg>
<!-- scrollbar arrows -->
<svg style="left:947px;top:81px" width="8" height="5"><path d="M0 4.500 l4-4.500 l4 4.500z" fill="#404040"/></svg>
<svg style="left:947px;top:961px" width="8" height="5"><path d="M0 0 l4 4.500 l4-4.500z" fill="#404040"/></svg>
<!-- sort triangles -->
<svg style="left:76px;top:88px" width="9" height="9"><path d="M0.500 8.500 l4-8 l4 8z" fill="#fff" stroke="#a0a0a0" stroke-width="1"/></svg>
<svg style="left:928px;top:116px" width="9" height="9"><path d="M0.500 8.500 l4-8 l4 8z" fill="#fff" stroke="#a0a0a0" stroke-width="1"/></svg>
<svg style="left:947px;top:432px" width="8" height="9"><path d="M0 1.500 h8 M0 3.500 h8 M0 5.500 h8 M0 7.500 h8" stroke="#5a5a5a" stroke-width="1" stroke-dasharray="8 0"/><path d="M0 2.500 h8 M0 4.500 h8 M0 6.500 h8 M0 8.500 h8" stroke="#fafafa" stroke-width="1"/></svg>
<div class="abs" style="left:963px;top:95px;width:314px;height:1px;background:#e2e3ea"></div>
<div class="abs" style="left:963px;top:333px;width:314px;height:1px;background:#e2e3ea"></div>
<div class="abs" style="left:963px;top:639px;width:314px;height:1px;background:#e2e3ea"></div>

</body></html>
